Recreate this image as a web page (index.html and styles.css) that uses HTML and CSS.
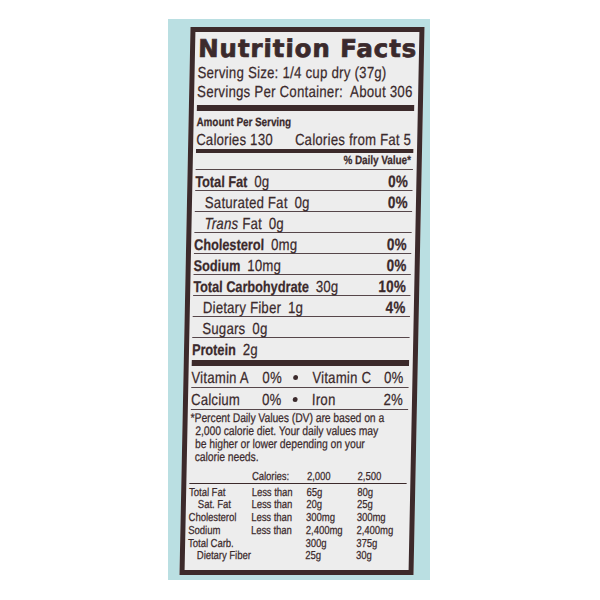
FILE: index.html
```html
<!DOCTYPE html>
<html>
<head>
<meta charset="utf-8">
<link rel="stylesheet" href="styles.css">
</head>
<body>
<div class="panel">
  <div class="label">
    <h1 class="title">Nutrition Facts</h1>
    <div class="cond">
      <div class="serving">Serving Size: 1/4 cup dry (37g)</div>
      <div class="serving">Servings Per Container:&nbsp; About 306</div>
      <div class="bar thick"></div>
      <div class="small-bold amount">Amount Per Serving</div>
      <div class="cal-row"><span>Calories 130</span><span>Calories from Fat 5</span></div>
      <div class="bar medium"></div>
      <div class="small-bold dv">% Daily Value*</div>
      <div class="rows">
        <div class="row"><span><b class="nm">Total Fat</b><span class="amt">0g</span></span><b class="pct">0%</b></div>
        <div class="row sub"><span>Saturated Fat<span class="amt">0g</span></span><b class="pct">0%</b></div>
        <div class="row sub"><span><i>Trans</i> Fat<span class="amt">0g</span></span></div>
        <div class="row"><span><b class="nm">Cholesterol</b><span class="amt">0mg</span></span><b class="pct">0%</b></div>
        <div class="row"><span><b class="nm">Sodium</b><span class="amt">10mg</span></span><b class="pct">0%</b></div>
        <div class="row"><span><b class="nm">Total Carbohydrate</b><span class="amt">30g</span></span><b class="pct">10%</b></div>
        <div class="row sub"><span>Dietary Fiber<span class="amt">1g</span></span><b class="pct">4%</b></div>
        <div class="row sub"><span>Sugars<span class="amt">0g</span></span></div>
        <div class="row"><span><b class="nm">Protein</b><span class="amt">2g</span></span></div>
      </div>
      <div class="bar thick2"></div>
      <div class="vit-row"><span>Vitamin A</span><span>0%</span><span class="dot"></span><span class="v2">Vitamin C</span><span>0%</span></div>
      <div class="vit-row"><span>Calcium</span><span>0%</span><span class="dot"></span><span class="v2">Iron</span><span>2%</span></div>
      <p class="foot">*Percent Daily Values (DV) are based on a<br>2,000 calorie diet. Your daily values may<br>be higher or lower depending on your<br>calorie needs.</p>
      <div class="tbl">
        <div class="tbl-row head"><span></span><span>Calories:</span><span>2,000</span><span>2,500</span></div>
        <div class="tbl-row first"><span>Total Fat</span><span>Less than</span><span>65g</span><span>80g</span></div>
        <div class="tbl-row"><span class="ind">Sat. Fat</span><span>Less than</span><span>20g</span><span>25g</span></div>
        <div class="tbl-row"><span>Cholesterol</span><span>Less than</span><span>300mg</span><span>300mg</span></div>
        <div class="tbl-row"><span>Sodium</span><span>Less than</span><span>2,400mg</span><span>2,400mg</span></div>
        <div class="tbl-row"><span>Total Carb.</span><span></span><span>300g</span><span>375g</span></div>
        <div class="tbl-row"><span class="ind span2">Dietary Fiber</span><span>25g</span><span>30g</span></div>
      </div>
    </div>
  </div>
</div>
</body>
</html>
```

FILE: styles.css
```css
html, body {
  margin: 0;
  padding: 0;
  background: #ffffff;
}

body {
  width: 600px;
  height: 600px;
  box-sizing: border-box;
  padding: 19px 0 0 168px;
  font-family: "Liberation Sans", Arial, sans-serif;
  color: #3b2a2c;
}

.panel {
  width: 262px;
  height: 561px;
  box-sizing: border-box;
  padding: 8px 11px 0 17px;
  background: #badfe2;
}

.label {
  width: 234px;
  height: 548px;
  box-sizing: border-box;
  border: 5px solid #3c2a2b;
  background: #ededed;
  padding: 0 4px 0 3px;
  transform: skewX(-1.15deg);
  overflow: hidden;
}

.title {
  margin: 0;
  padding-top: 3px;
  font-family: "DejaVu Sans", "Liberation Sans", sans-serif;
  font-weight: bold;
  font-size: 24.5px;
  line-height: 28px;
  letter-spacing: 0.9px;
  white-space: nowrap;
  -webkit-text-stroke: 0.7px #3b2a2c;
}

/* condensed type: Helvetica Condensed look */
.cond {
  width: 264.6px;
  transform: scaleX(0.82);
  transform-origin: 0 0;
  -webkit-text-stroke: 0.25px #3b2a2c;
}

.serving {
  font-size: 16px;
  line-height: 19px;
  letter-spacing: 0.35px;
  white-space: nowrap;
}

.bar {
  background: #3c2a2b;
}

.thick {
  margin-top: 4px;
  height: 6px;
}

.medium {
  height: 4px;
}

.thick2 {
  margin-top: 2px;
  height: 6px;
}

.small-bold {
  font-weight: bold;
  white-space: nowrap;
  font-size: 12px;
  line-height: 14px;
}

.amount {
  margin-top: 4px;
}

.cal-row {
  display: flex;
  justify-content: space-between;
  margin-top: 1px;
  padding-right: 2.4px;
  font-size: 16px;
  line-height: 19px;
  letter-spacing: 0.3px;
  white-space: nowrap;
}

.dv {
  text-align: right;
  padding-right: 2.4px;
}

.rows {
  margin-top: 2px;
}

.row {
  display: flex;
  justify-content: space-between;
  align-items: baseline;
  height: 21px;
  box-sizing: border-box;
  border-top: 1px solid #56464a;
  padding: 3px 5px 0 0;
  font-size: 16px;
  line-height: 17px;
  letter-spacing: 0.3px;
  white-space: nowrap;
}

.row.sub {
  padding-left: 12.2px;
}

.nm {
  font-size: 15.5px;
  letter-spacing: 0;
}

.amt {
  margin-left: 8.5px;
}

.pct {
  font-size: 16.5px;
  letter-spacing: 0.3px;
}

.vit-row {
  display: grid;
  grid-template-columns: 86.6px 32.9px 14.6px 1fr auto;
  align-items: center;
  padding: 3px 6px 1px 0;
  border-bottom: 1px solid #56464a;
  font-size: 16px;
  line-height: 17px;
  letter-spacing: 0.3px;
  white-space: nowrap;
}

.dot {
  justify-self: center;
  width: 6px;
  height: 5px;
  border-radius: 50%;
  background: #3b2a2c;
}

.v2 {
  padding-left: 13.4px;
}

.foot {
  margin: 2px 0 0;
  padding-left: 6px;
  text-indent: -6px;
  font-size: 12.5px;
  line-height: 13px;
  white-space: nowrap;
}

.tbl {
  font-size: 11.5px;
  line-height: 12.7px;
  white-space: nowrap;
}

.tbl-row {
  display: grid;
  grid-template-columns: 76.3px 67px 61.8px 1fr;
}

.tbl-row.head {
  margin-top: 5.7px;
  padding-bottom: 1px;
  border-bottom: 1px solid #3c2a2b;
}

.tbl-row.first {
  padding-top: 1.3px;
}

.ind {
  padding-left: 11px;
}

.span2 {
  grid-column: span 2;
}
```
